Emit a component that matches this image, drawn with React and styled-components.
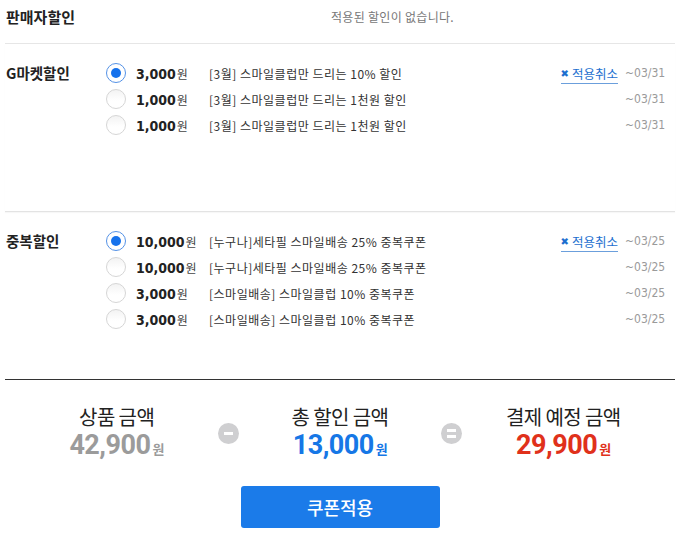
import React from "react";
import styled, { createGlobalStyle } from "styled-components";

const Global = createGlobalStyle`
  html, body { margin: 0; padding: 0; background: #fff; }
  body { font-family: "Noto Sans CJK KR", "Noto Sans", sans-serif; color: #333; }
`;

const Wrap = styled.div`
  width: 670px;
  margin-left: 5px;
`;

const TopRow = styled.div`
  display: flex;
  align-items: flex-start;
  height: 44px;
  box-sizing: border-box;
  padding-top: 6px;
  border-bottom: 1px solid #e6e6e6;
`;

const Label = styled.div`
  width: 100px;
  flex: none;
  font-size: ${(p) => p.$size || 14.5}px;
  font-weight: 700;
  color: #222;
  line-height: ${(p) => p.$lh || 26}px;
  padding-left: 1px;
`;

const Empty = styled.div`
  flex: 1;
  text-align: center;
  font-size: 12px;
  letter-spacing: 0.3px;
  color: #777;
  line-height: 22px;
  padding-left: 4px;
`;

const Section = styled.div`
  display: flex;
  align-items: flex-start;
  min-height: 168px;
  box-sizing: border-box;
  padding-top: 16px;
  border-bottom: 1px solid ${(p) => (p.$dark ? "#333" : "#e3e3e3")};
  box-shadow: ${(p) => (p.$dark ? "none" : "0 1px 1px rgba(0,0,0,0.03)")};
`;

const List = styled.div`
  flex: 1;
  display: flex;
  flex-direction: column;
`;

const Row = styled.div`
  display: flex;
  align-items: center;
  height: 26px;
  padding-right: 10px;
`;

const Radio = styled.span`
  width: 20px;
  height: 20px;
  box-sizing: border-box;
  border-radius: 50%;
  flex: none;
  border: 1px solid ${(p) => (p.$on ? "#5592e6" : "#d6d6d6")};
  background: ${(p) => (p.$on ? "#fff" : "linear-gradient(#f3f3f3, #fff 60%)")};
  display: flex;
  align-items: center;
  justify-content: center;
  &::after {
    content: "";
    display: ${(p) => (p.$on ? "block" : "none")};
    width: 10px;
    height: 10px;
    border-radius: 50%;
    background: #1672ec;
  }
`;

const Price = styled.span`
  width: 73px;
  flex: none;
  margin-left: 10px;
  font-family: "DejaVu Sans Condensed", "DejaVu Sans", sans-serif;
  font-stretch: condensed;
  font-weight: 700;
  font-size: 14px;
  color: #222;
  white-space: nowrap;
`;

const Won = styled.span`
  font-family: "Noto Sans CJK KR", sans-serif;
  font-weight: 400;
  font-size: 12px;
  color: #444;
  margin-left: 1px;
`;

const Desc = styled.span`
  flex: 1;
  font-size: 12px;
  letter-spacing: 0.5px;
  color: #333;
  white-space: nowrap;
`;

const Cancel = styled.a`
  display: inline-flex;
  align-items: center;
  gap: 3px;
  font-size: 12.5px;
  color: #1d6fcf;
  border-bottom: 1px solid #6b9fdc;
  padding-bottom: 1px;
  margin-top: 4px;
  margin-right: 7px;
  line-height: 16px;
  cursor: pointer;
`;

const X = styled.span`
  font-size: 10px;
  color: #1d6fcf;
  font-family: "DejaVu Sans", sans-serif;
`;

const Date = styled.span`
  width: 40px;
  text-align: right;
  font-family: "DejaVu Sans Condensed", "DejaVu Sans", sans-serif;
  font-stretch: condensed;
  font-size: 12px;
  color: #9a9a9a;
`;

const Summary = styled.div`
  display: grid;
  grid-template-columns: 1fr 0 1fr 0 1fr;
  padding-top: 24px;
`;

const Col = styled.div`
  display: flex;
  flex-direction: column;
  align-items: center;
`;

const SumLabel = styled.div`
  font-size: 20px;
  letter-spacing: -0.6px;
  color: #222;
  line-height: 26px;
`;

const Amount = styled.div`
  font-family: "Liberation Sans Narrow", Roboto, sans-serif;
  font-weight: 700;
  font-size: 27px;
  letter-spacing: -0.5px;
  line-height: 30px;
  color: ${(p) => p.$color};
  white-space: nowrap;
`;

const SmallWon = styled.span`
  font-family: "Noto Sans CJK KR", sans-serif;
  font-size: 13px;
  font-weight: 700;
  margin-left: 2px;
`;

const OpCell = styled.div`
  display: flex;
  align-items: center;
  justify-content: center;
  width: 0;
  overflow: visible;
  margin-top: -2px;
`;

const Op = styled.span`
  flex: none;
  width: 21px;
  height: 21px;
  border-radius: 50%;
  background: #cfcfd1;
  display: flex;
  flex-direction: column;
  align-items: center;
  justify-content: center;
  gap: 3px;
`;

const Bar = styled.span`
  width: 9px;
  height: 3px;
  background: #fff;
`;

const Button = styled.button`
  display: block;
  width: 199px;
  height: 42px;
  margin: 22px auto 0;
  border: 0;
  border-radius: 3px;
  background: #1b7be9;
  color: #fff;
  font-family: "Noto Sans CJK KR", sans-serif;
  font-size: 18px;
  font-weight: 500;
  cursor: pointer;
`;

const gmarket = [
  { on: true, price: "3,000", desc: "[3월] 스마일클럽만 드리는 10% 할인", date: "~03/31" },
  { price: "1,000", desc: "[3월] 스마일클럽만 드리는 1천원 할인", date: "~03/31" },
  { price: "1,000", desc: "[3월] 스마일클럽만 드리는 1천원 할인", date: "~03/31" },
];

const dup = [
  { on: true, price: "10,000", desc: "[누구나]세타필 스마일배송 25% 중복쿠폰", date: "~03/25" },
  { price: "10,000", desc: "[누구나]세타필 스마일배송 25% 중복쿠폰", date: "~03/25" },
  { price: "3,000", desc: "[스마일배송] 스마일클럽 10% 중복쿠폰", date: "~03/25" },
  { price: "3,000", desc: "[스마일배송] 스마일클럽 10% 중복쿠폰", date: "~03/25" },
];

function Coupons({ items }) {
  return (
    <List>
      {items.map((it, i) => (
        <Row key={i}>
          <Radio $on={it.on} />
          <Price>
            {it.price}
            <Won>원</Won>
          </Price>
          <Desc>{it.desc}</Desc>
          {it.on && (
            <Cancel>
              <X>✖</X>적용취소
            </Cancel>
          )}
          <Date>{it.date}</Date>
        </Row>
      ))}
    </List>
  );
}

export default function App() {
  return (
    <>
      <Global />
      <Wrap>
        <TopRow>
          <Label $size={15} $lh={22}>판매자할인</Label>
          <Empty>적용된 할인이 없습니다.</Empty>
        </TopRow>
        <Section>
          <Label>G마켓할인</Label>
          <Coupons items={gmarket} />
        </Section>
        <Section $dark>
          <Label>중복할인</Label>
          <Coupons items={dup} />
        </Section>
        <Summary>
          <Col>
            <SumLabel>상품 금액</SumLabel>
            <Amount $color="#9b9b9b">
              42,900<SmallWon>원</SmallWon>
            </Amount>
          </Col>
          <OpCell>
            <Op>
              <Bar />
            </Op>
          </OpCell>
          <Col>
            <SumLabel>총 할인 금액</SumLabel>
            <Amount $color="#1677e6">
              13,000<SmallWon>원</SmallWon>
            </Amount>
          </Col>
          <OpCell>
            <Op>
              <Bar />
              <Bar />
            </Op>
          </OpCell>
          <Col>
            <SumLabel>결제 예정 금액</SumLabel>
            <Amount $color="#e0311b">
              29,900<SmallWon>원</SmallWon>
            </Amount>
          </Col>
        </Summary>
        <Button>쿠폰적용</Button>
      </Wrap>
    </>
  );
}
